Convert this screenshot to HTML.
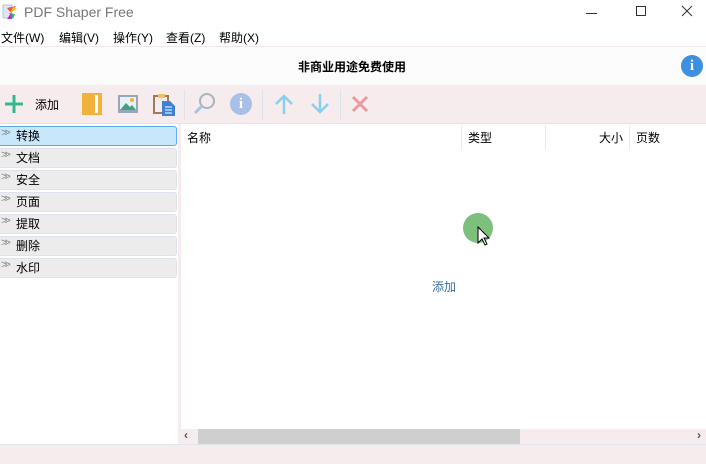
<!DOCTYPE html>
<html><head><meta charset="utf-8"><style>
*{margin:0;padding:0;box-sizing:border-box}
body{width:706px;height:464px;background:#fff;font-family:"Liberation Sans","Noto Sans CJK SC",sans-serif;font-size:12px;color:#000;position:relative;overflow:hidden}
.abs{position:absolute}
.cat{position:absolute;left:0;width:177px;height:20px;background:#ececec;border:1px solid #dde3ea;border-left:none;border-radius:0 3px 3px 0;}
.cat span.a{position:absolute;left:1px;top:0px;color:#888;font-size:11px;letter-spacing:-3px}
.cat span.t{position:absolute;left:16px;top:0px;font-size:12px;line-height:18px}
</style></head><body>
<svg class="abs" style="left:2px;top:4px" width="16" height="16"><rect x="1" y="1" width="9" height="13" fill="#dde6f2" stroke="#9ab" stroke-width=".6"/><path d="M5 4l4 5 5-7z" fill="#e53"/><path d="M8 9l3-6 4 2z" fill="#fb2"/><path d="M7 9l4 6 2-5z" fill="#3b5"/><path d="M9 9l-4 6h5z" fill="#a3c"/></svg>
<div class="abs" style="left:24px;top:4px;font-size:14px;color:#777">PDF Shaper Free</div>
<div class="abs" style="left:586px;top:13px;width:11px;height:1px;background:#333"></div>
<div class="abs" style="left:636px;top:6px;width:10px;height:10px;border:1px solid #333"></div>
<svg class="abs" style="left:681px;top:5px" width="12" height="12"><path d="M1 1L11 11M11 1L1 11" stroke="#333" stroke-width="1"/></svg>
<div class="abs" style="left:1px;top:29px">文件(W)</div>
<div class="abs" style="left:59px;top:29px">编辑(V)</div>
<div class="abs" style="left:113px;top:29px">操作(Y)</div>
<div class="abs" style="left:166px;top:29px">查看(Z)</div>
<div class="abs" style="left:219px;top:29px">帮助(X)</div>
<div class="abs" style="left:0;top:46px;width:706px;height:39px;background:#fdfcfc;border-top:1px solid #efe6e7"></div>
<div class="abs" style="left:298px;top:58px;font-weight:bold;font-size:12px">非商业用途免费使用</div>
<div class="abs" style="left:681px;top:55px;width:22px;height:22px;border-radius:50%;background:#3d8fe0;color:#fff;font-weight:bold;font-size:15px;text-align:center;line-height:22px;font-family:'Liberation Serif',serif">i</div>
<div class="abs" style="left:0;top:85px;width:706px;height:39px;background:#f6eced;border-bottom:1px solid #dfe3ea"></div>
<svg class="abs" style="left:4px;top:94px" width="20" height="20"><path d="M10 1v18M1 10h18" stroke="#35b88f" stroke-width="3"/></svg>
<div class="abs" style="left:35px;top:96px">添加</div>
<svg class="abs" style="left:81px;top:92px" width="22" height="24"><rect x="1" y="1" width="20" height="22" fill="#f2b03c"/><rect x="14" y="3" width="3" height="18" fill="#fff"/></svg>
<svg class="abs" style="left:117px;top:93px" width="22" height="22"><rect x="1" y="2" width="20" height="18" fill="#9aa6b6"/><rect x="3" y="4" width="16" height="13" fill="#e8f1f6"/><path d="M3 17l6-7 4 4 2-2 4 5z" fill="#3ea28a"/><circle cx="15" cy="7" r="2" fill="#f2b03c"/></svg>
<svg class="abs" style="left:153px;top:92px" width="24" height="24"><rect x="1" y="4" width="14" height="17" fill="none" stroke="#a07a5f" stroke-width="2"/><rect x="5" y="2" width="7" height="4" fill="#f2c060"/><path d="M9 9h8l5 5v10H9z" fill="#3d82d8"/><path d="M12 15h7M12 18h7M12 21h7" stroke="#fff"/></svg>
<div class="abs" style="left:184px;top:90px;width:1px;height:30px;background:#dde3ea"></div>
<svg class="abs" style="left:193px;top:92px" width="24" height="24"><circle cx="14" cy="9" r="7" fill="none" stroke="#a8b4c2" stroke-width="2"/><path d="M9 14L2 21" stroke="#a8c4e0" stroke-width="3"/></svg>
<div class="abs" style="left:230px;top:93px;width:22px;height:22px;border-radius:50%;background:#a8c0e8;color:#fff;font-weight:bold;font-size:15px;text-align:center;line-height:22px;font-family:'Liberation Serif',serif">i</div>
<div class="abs" style="left:262px;top:90px;width:1px;height:30px;background:#dde3ea"></div>
<svg class="abs" style="left:273px;top:93px" width="22" height="22"><path d="M11 21V3M3 11l8-8 8 8" stroke="#8ad0ee" stroke-width="2.5" fill="none"/></svg>
<svg class="abs" style="left:309px;top:93px" width="22" height="22"><path d="M11 1v18M3 11l8 8 8-8" stroke="#8ad0ee" stroke-width="2.5" fill="none"/></svg>
<div class="abs" style="left:340px;top:90px;width:1px;height:30px;background:#dde3ea"></div>
<svg class="abs" style="left:351px;top:95px" width="18" height="18"><path d="M2 2l14 14M16 2L2 16" stroke="#e89aa0" stroke-width="3"/></svg>
<div class="cat" style="top:126px;background:#c9e7fb;border:1px solid #5aaeee;border-left:none"><span class="a">&gt;&gt;</span><span class="t">转换</span></div>
<div class="cat" style="top:148px"><span class="a">&gt;&gt;</span><span class="t">文档</span></div>
<div class="cat" style="top:170px"><span class="a">&gt;&gt;</span><span class="t">安全</span></div>
<div class="cat" style="top:192px"><span class="a">&gt;&gt;</span><span class="t">页面</span></div>
<div class="cat" style="top:214px"><span class="a">&gt;&gt;</span><span class="t">提取</span></div>
<div class="cat" style="top:236px"><span class="a">&gt;&gt;</span><span class="t">删除</span></div>
<div class="cat" style="top:258px"><span class="a">&gt;&gt;</span><span class="t">水印</span></div>
<div class="abs" style="left:178px;top:124px;width:3px;height:321px;background:#f6eced"></div>
<div class="abs" style="left:187px;top:129px">名称</div>
<div class="abs" style="left:461px;top:125px;width:1px;height:24px;background:#eaeaea"></div>
<div class="abs" style="left:468px;top:129px">类型</div>
<div class="abs" style="left:545px;top:125px;width:1px;height:24px;background:#eaeaea"></div>
<div class="abs" style="left:599px;top:129px">大小</div>
<div class="abs" style="left:629px;top:125px;width:1px;height:24px;background:#eaeaea"></div>
<div class="abs" style="left:636px;top:129px">页数</div>
<div class="abs" style="left:463px;top:213px;width:30px;height:30px;border-radius:50%;background:#7dbf7d"></div>
<svg class="abs" style="left:477px;top:226px" width="14" height="22"><path d="M1 1v16l4-4 3 6 2-1-3-6h5z" fill="#fff" stroke="#000"/></svg>
<div class="abs" style="left:432px;top:278px;color:#3a6ea5">添加</div>
<div class="abs" style="left:181px;top:429px;width:525px;height:15px;background:#f6eced"></div>
<div class="abs" style="left:198px;top:429px;width:322px;height:15px;background:#cfcfcf"></div>
<div class="abs" style="left:184px;top:428px;font-size:12px;color:#555;font-weight:bold">‹</div>
<div class="abs" style="left:697px;top:428px;font-size:12px;color:#555;font-weight:bold">›</div>
<div class="abs" style="left:0;top:444px;width:706px;height:20px;background:#f6eced;border-top:1px solid #dfe3ea"></div>
</body></html>
